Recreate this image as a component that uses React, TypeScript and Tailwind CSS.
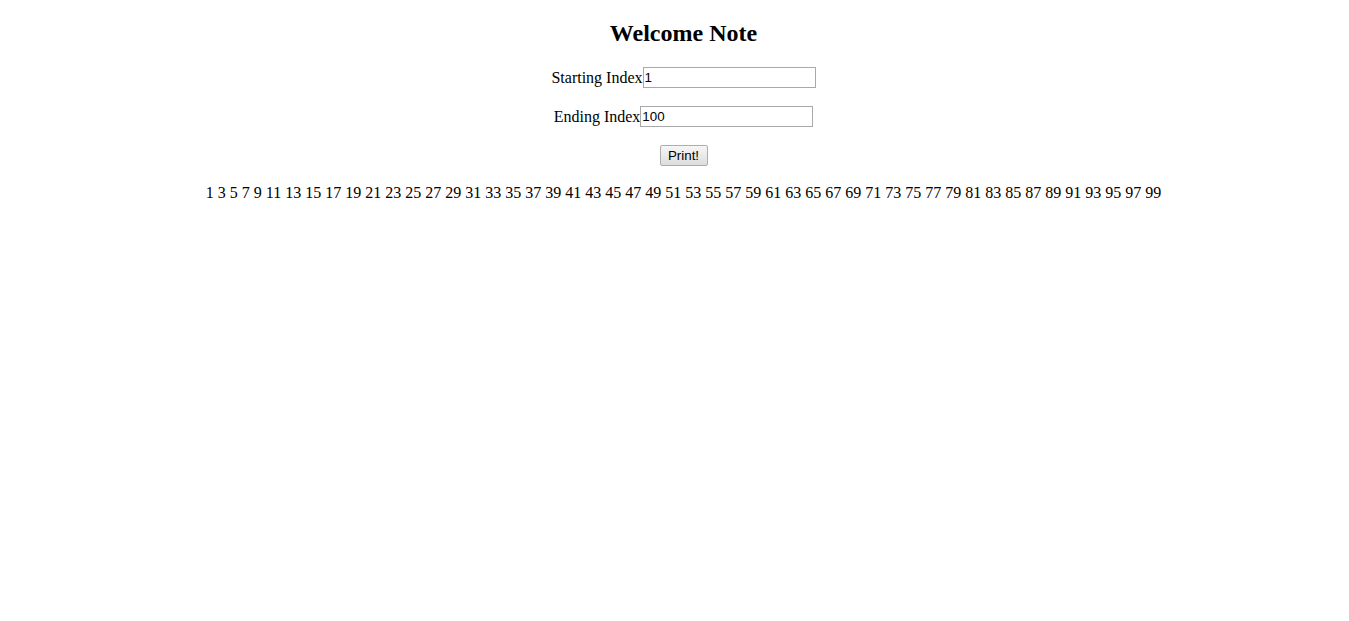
import { useState } from "react";

export default function App() {
  const [start, setStart] = useState("1");
  const [end, setEnd] = useState("100");
  const [nums, setNums] = useState<number[]>(() => {
    const out: number[] = [];
    for (let i = 1; i <= 100; i++) if (i % 2 === 1) out.push(i);
    return out;
  });

  const print = () => {
    const a = parseInt(start, 10);
    const b = parseInt(end, 10);
    const out: number[] = [];
    for (let i = a; i <= b; i++) if (i % 2 === 1) out.push(i);
    setNums(out);
  };

  return (
    <div className="pl-[18px] text-center text-black bg-white font-['Liberation_Serif',serif] text-base leading-normal">
      <h2 className="text-2xl font-bold pt-[20px] mb-[20px] leading-[27px]">Welcome Note</h2>

      <p className="my-4 flex justify-center items-start h-[23px] leading-[21px]">
        Starting Index
        <input
          value={start}
          onChange={(e) => setStart(e.target.value)}
          className="w-[173px] h-[21px] border border-[#a9a9a9] px-[1px] text-[13.33px] font-['Liberation_Sans',sans-serif] text-left outline-none"
        />
      </p>

      <p className="my-4 flex justify-center items-start h-[23px] leading-[21px]">
        Ending Index
        <input
          value={end}
          onChange={(e) => setEnd(e.target.value)}
          className="w-[173px] h-[21px] border border-[#a9a9a9] px-[1px] text-[13.33px] font-['Liberation_Sans',sans-serif] text-left outline-none"
        />
      </p>

      <p className="mt-4 flex justify-center items-start h-[23px]">
        <button
          onClick={print}
          className="w-[48px] h-[21px] border border-[#adadad] rounded-[2px] bg-gradient-to-b from-[#f6f6f6] to-[#dddddd] text-[13.33px] font-['Liberation_Sans',sans-serif] leading-none"
        >
          Print!
        </button>
      </p>

      <p className="mt-[13px] mb-4">{nums.join(" ")}</p>
    </div>
  );
}
